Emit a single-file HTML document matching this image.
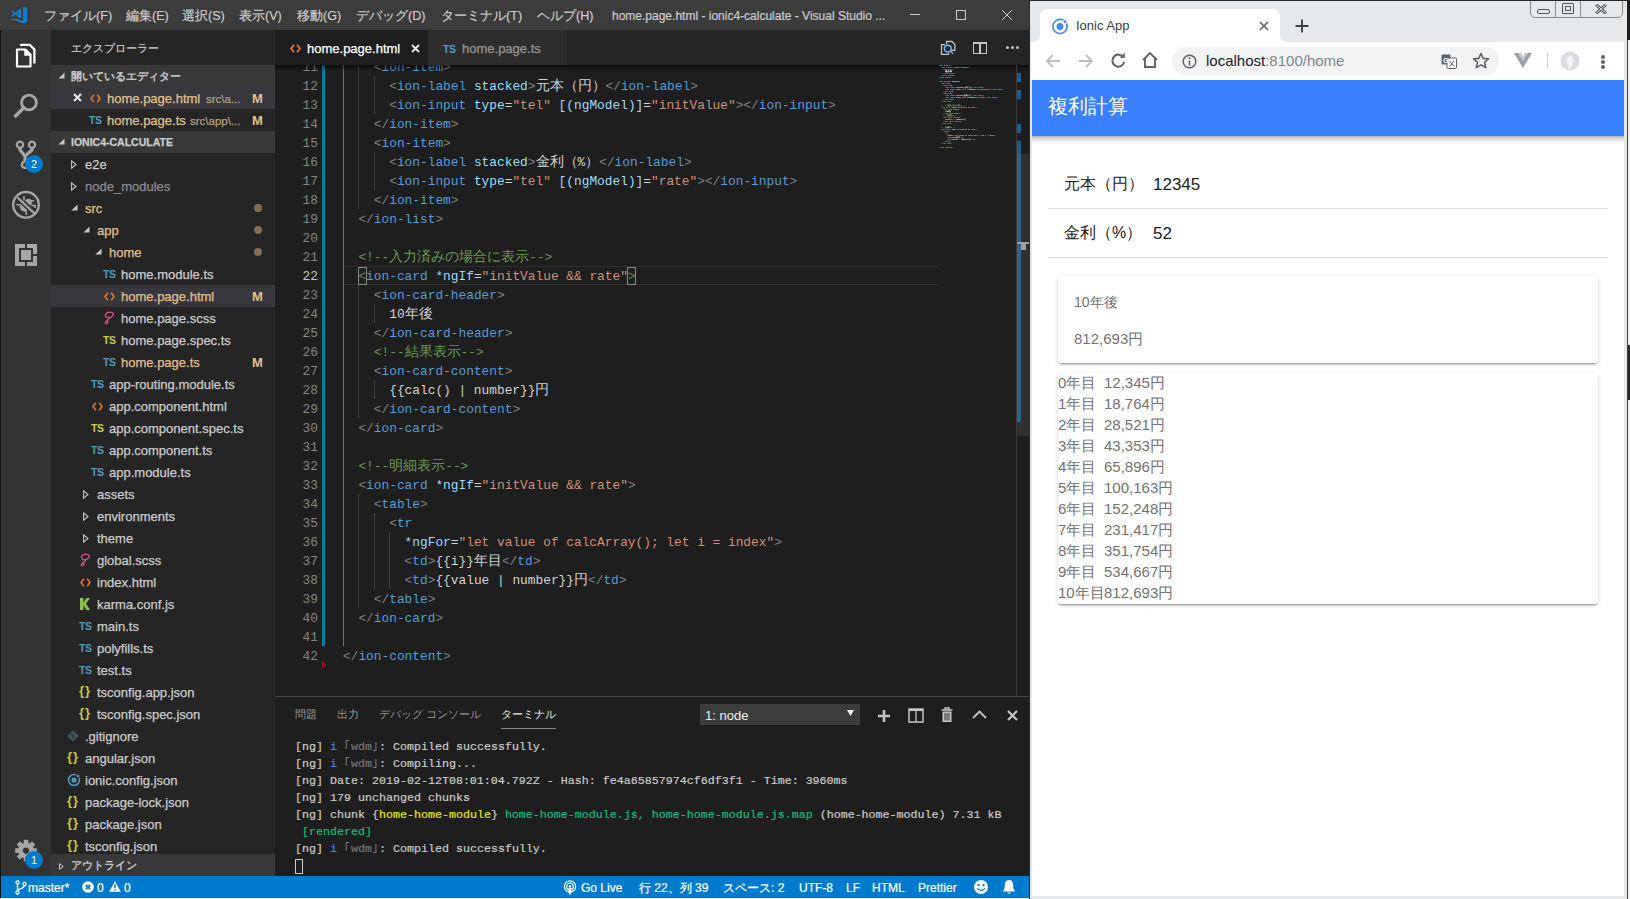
<!DOCTYPE html><html><head><meta charset="utf-8"><style>
*{box-sizing:border-box}
html,body{margin:0;padding:0}
body{width:1630px;height:899px;overflow:hidden;position:relative;background:#e8e8e8;font-family:"Liberation Sans",sans-serif}
.abs{position:absolute}
.t{position:absolute;white-space:pre;line-height:1}
#vs{position:absolute;left:0;top:0;width:1030px;height:898px;background:#1e1e1e;overflow:hidden}
#title{position:absolute;left:0;top:0;width:1030px;height:30px;background:#3c3c3c}
#title .m{position:absolute;top:8.5px;font-size:12.6px;color:#cccccc;white-space:pre;line-height:14px;-webkit-text-stroke:0.2px currentColor}
#act{position:absolute;left:1px;top:30px;width:50px;height:846px;background:#333333}
#side{position:absolute;left:51px;top:30px;width:224px;height:846px;background:#252526;overflow:hidden}
.row{position:absolute;left:0;width:224px;height:22px}
.row .n{position:absolute;top:5px;font-size:13px;line-height:14px;white-space:pre;color:#cccccc;-webkit-text-stroke:0.25px currentColor}
.hdr{background:#383838}
.sel{background:#37373d}
.mod{color:#e2c08d !important}
.dot{position:absolute;left:203px;top:7px;width:8px;height:8px;border-radius:4px;background:#7f6f57}
.M{position:absolute;left:201px;top:5px;font-size:13px;line-height:14px;color:#e2c08d;font-weight:bold}
.ico{position:absolute;top:3px;font-size:11px;font-weight:bold;line-height:16px}
.tw{position:absolute;top:7px;width:0;height:0}
.tw.c{border-left:5px solid #c5c5c5;border-top:4px solid transparent;border-bottom:4px solid transparent;top:7px}
.tw.o{border-right:6px solid #c5c5c5;border-top:6px solid transparent;top:8px}
#tabs{position:absolute;left:275px;top:30px;width:755px;height:35px;background:#252526}
#ed{position:absolute;left:275px;top:65px;width:755px;height:631px;background:#1e1e1e;overflow:hidden}
.ln{position:absolute;left:0;width:42px;text-align:right;font-family:"Liberation Mono",monospace;font-size:12.83px;line-height:19px;color:#858585;white-space:pre}
.cl{position:absolute;left:68px;font-family:"Liberation Mono",monospace;font-size:12.83px;line-height:19px;color:#d4d4d4;white-space:pre}
.g{position:absolute;width:1px;background:#404040}
.cj{font-size:13.85px}
.hw{display:inline-block;width:7px;overflow:hidden;vertical-align:top}
.mm .cj{font-size:10px}
.p{color:#808080}.tg{color:#569cd6}.at{color:#9cdcfe}.st{color:#ce9178}.cm{color:#6a9955}.tx{color:#d4d4d4}
#panel{position:absolute;left:275px;top:696px;width:755px;height:180px;background:#1e1e1e;border-top:1px solid #454545}
.term{position:absolute;left:20px;font-family:"Liberation Mono",monospace;font-size:11.67px;line-height:17px;color:#cccccc;white-space:pre;-webkit-text-stroke:0.2px currentColor}
#status{position:absolute;left:1px;top:876px;width:1029px;height:22px;background:#007acc;color:#fff}
#status .s{position:absolute;top:6px;font-size:12px;line-height:13px;white-space:pre;color:#fff;-webkit-text-stroke:0.2px currentColor}
#chrome{position:absolute;left:1029px;top:0;width:598px;height:899px;background:#e4e8eb;border-left:1px solid #2a2a2a;overflow:hidden}
#page{position:absolute;left:2px;top:80px;width:592px;height:816px;background:#fff;overflow:hidden}
</style></head><body>
<div id="vs">
<div class="abs" style="left:0;top:0;width:1px;height:898px;background:#111"></div>
<div id="title">
<svg class="abs" style="left:6px;top:2px" width="28" height="26" viewBox="0 0 28 26">
<path d="M17 5 L18.3 4.9 L21 6 V20 L18.5 21 L17 20.6 Z" fill="#0a7fd4"/>
<path d="M5.5 17.3 C9 17.5 13 19 17 20.8 L17.5 19.8 C13 18.3 9 17 5.5 17.3 Z" fill="#0e88e0" stroke="#0e88e0" stroke-width="0.9"/>
<path d="M8.7 11.6 L13.8 7.3 L15 7.6 V15.6 L13.8 16 Z M10.9 11.6 L13.2 13.4 V9.9 Z" fill="#0e88e0" fill-rule="evenodd"/>
<path d="M6 9.2 L9.3 11.6 L6 14.6" fill="none" stroke="#0e88e0" stroke-width="1.3"/>
</svg>
<div class="m" style="left:44px">ファイル(F)</div>
<div class="m" style="left:126px">編集(E)</div>
<div class="m" style="left:182px">選択(S)</div>
<div class="m" style="left:239px">表示(V)</div>
<div class="m" style="left:297px">移動(G)</div>
<div class="m" style="left:356px">デバッグ(D)</div>
<div class="m" style="left:441px">ターミナル(T)</div>
<div class="m" style="left:537px">ヘルプ(H)</div>
<div class="m" style="left:612px;font-size:12px">home.page.html - ionic4-calculate - Visual Studio ...</div>
<div class="abs" style="left:910px;top:14px;width:10px;height:1px;background:#cccccc"></div>
<div class="abs" style="left:956px;top:10px;width:10px;height:10px;border:1px solid #cccccc"></div>
<svg class="abs" style="left:1002px;top:10px" width="10" height="10" viewBox="0 0 10 10"><path d="M0 0 L10 10 M10 0 L0 10" stroke="#cccccc" stroke-width="1"/></svg>
</div>
<div id="act">
<svg class="abs" style="left:14px;top:13px" width="24" height="25" viewBox="0 0 24 25">
<path d="M5.2 2.5 L6.2 1.9 H14.8 L19.4 6.5 V20.5" fill="none" stroke="#ffffff" stroke-width="2.3"/>
<path d="M2 6.5 H10.5 L15.5 11.5 V23.5 H2 Z" fill="none" stroke="#ffffff" stroke-width="2.2" stroke-linejoin="round"/>
<path d="M10 6 V12 H16" fill="#ffffff" stroke="#ffffff" stroke-width="1.5"/>
</svg>
<svg class="abs" style="left:11px;top:61.5px" width="28" height="28" viewBox="0 0 28 28">
<circle cx="17" cy="10.5" r="7.4" fill="none" stroke="#a6a6a6" stroke-width="2.9"/>
<path d="M11.8 15.8 L3.5 24" stroke="#a6a6a6" stroke-width="3.4" stroke-linecap="round"/>
</svg>
<svg class="abs" style="left:12px;top:105px" width="26" height="34" viewBox="0 0 26 34">
<circle cx="7" cy="9.7" r="3.1" fill="none" stroke="#a6a6a6" stroke-width="2.3"/>
<circle cx="19" cy="9.7" r="3.1" fill="none" stroke="#a6a6a6" stroke-width="2.3"/>
<circle cx="12" cy="29.8" r="3.1" fill="none" stroke="#a6a6a6" stroke-width="2.3"/>
<path d="M7 12.5 V15 L12 21 V26.5 M19 12.5 V15 L12 21" fill="none" stroke="#a6a6a6" stroke-width="3.2"/>
</svg>
<div class="abs" style="left:24px;top:125px;width:18px;height:18px;border-radius:9px;background:#007acc;color:#fff;font-size:11px;line-height:18px;text-align:center">2</div>
<svg class="abs" style="left:7px;top:156px" width="36" height="36" viewBox="0 0 36 36">
<g stroke="#a6a6a6" fill="none">
<circle cx="18" cy="18.8" r="12.8" stroke-width="2.4"/>
<path d="M9.5 11.5 L26.5 27.5" stroke-width="2.4"/>
<path d="M8.3 18.8 H13 M16 10 V14.5 M23 15 L26 14.5 M23.5 19.5 H27 V22 M18 25 L18.4 29" stroke-width="1.6"/>
</g>
<path d="M11.6 21 C12.5 26 17.5 26.5 19.5 24.5 L13.8 19 C12.5 19 11.5 19.8 11.6 21 Z" fill="#a6a6a6"/>
<path d="M17 14.5 L22.5 19.8 C24 18.5 24.5 15.5 23 13.5 C21 12 18.5 12.5 17 14.5 Z" fill="#a6a6a6"/>
</svg>
<svg class="abs" style="left:14px;top:214px" width="22" height="22" viewBox="0 0 22 22">
<path d="M0 0 H10 V4 H4 V18 H10 V22 H0 Z" fill="#a6a6a6"/>
<path d="M12 0 H22 V10 H18 V4 H12 Z" fill="#a6a6a6"/>
<path d="M12 22 H22 V12 H18 V18 H12 Z" fill="#a6a6a6"/>
<rect x="6" y="6" width="10" height="10" fill="#a6a6a6"/>
</svg>
<svg class="abs" style="left:12px;top:808px" width="26" height="26" viewBox="0 0 26 26">
<g transform="translate(13 12.6)">
<circle r="7.8" fill="#a6a6a6"/>
<g fill="#a6a6a6"><rect x="-2.3" y="-10.8" width="4.6" height="5" transform="rotate(0)"/><rect x="-2.3" y="-10.8" width="4.6" height="5" transform="rotate(45)"/><rect x="-2.3" y="-10.8" width="4.6" height="5" transform="rotate(90)"/><rect x="-2.3" y="-10.8" width="4.6" height="5" transform="rotate(135)"/><rect x="-2.3" y="-10.8" width="4.6" height="5" transform="rotate(180)"/><rect x="-2.3" y="-10.8" width="4.6" height="5" transform="rotate(225)"/><rect x="-2.3" y="-10.8" width="4.6" height="5" transform="rotate(270)"/><rect x="-2.3" y="-10.8" width="4.6" height="5" transform="rotate(315)"/></g>
<circle r="3.1" fill="#333333"/>
</g>
</svg>
<div class="abs" style="left:24px;top:821px;width:18px;height:18px;border-radius:9px;background:#007acc;color:#fff;font-size:11px;line-height:18px;text-align:center">1</div>
</div>
<div id="side">
<div class="t" style="left:20px;top:13px;font-size:11px;color:#c8c8c8;-webkit-text-stroke:0.2px currentColor">エクスプローラー</div>
<div class="row hdr" style="top:35px"><svg class="abs" style="left:6.5px;top:6.5px" width="7" height="7" viewBox="0 0 7 7"><path d="M6.5 0.5 V6.5 H0.5 Z" fill="#c5c5c5"/></svg><div class="n" style="left:20px;top:4px;font-size:11px;color:#cccccc;-webkit-text-stroke:0.45px currentColor">開いているエディター</div></div>
<div class="row sel" style="top:57px"><svg class="abs" style="left:22px;top:6px" width="9" height="9" viewBox="0 0 9 9"><path d="M1 1 L8 8 M8 1 L1 8" stroke="#e8e8e8" stroke-width="2"/></svg><svg class="abs" style="left:39px;top:7px" width="11" height="9" viewBox="0 0 11 9"><path d="M3.8 0.8 L1 4.5 L3.8 8.2 M7.2 0.8 L10 4.5 L7.2 8.2" stroke="#e37933" stroke-width="1.5" fill="none"/></svg><div class="n mod" style="left:56px">home.page.html</div><div class="n" style="left:155px;font-size:11.5px;top:5px;color:#b5a07d">src\a...</div><div class="M">M</div></div>
<div class="row" style="top:79px"><div class="ico" style="left:38px;color:#519aba;font-size:10.5px;letter-spacing:-0.3px;top:3px">TS</div><div class="n mod" style="left:56px">home.page.ts</div><div class="n" style="left:139px;font-size:11.5px;top:5px;color:#b5a07d">src\app\...</div><div class="M">M</div></div>
<div class="row hdr" style="top:101px"><svg class="abs" style="left:6.5px;top:6.5px" width="7" height="7" viewBox="0 0 7 7"><path d="M6.5 0.5 V6.5 H0.5 Z" fill="#c5c5c5"/></svg><div class="n" style="left:20px;top:4px;font-size:10.5px;font-weight:bold;color:#cccccc">IONIC4-CALCULATE</div></div>
<div class="row " style="top:123px"><svg class="abs" style="left:20px;top:7px" width="6" height="9" viewBox="0 0 6 9"><path d="M0.6 0.8 L5 4.5 L0.6 8.2 Z" fill="none" stroke="#c5c5c5" stroke-width="1.1"/></svg><div class="n" style="left:34px;color:#cccccc">e2e</div></div>
<div class="row " style="top:145px"><svg class="abs" style="left:20px;top:7px" width="6" height="9" viewBox="0 0 6 9"><path d="M0.6 0.8 L5 4.5 L0.6 8.2 Z" fill="none" stroke="#c5c5c5" stroke-width="1.1"/></svg><div class="n" style="left:34px;color:#8c8c8c">node_modules</div></div>
<div class="row " style="top:167px"><svg class="abs" style="left:20px;top:7px" width="7" height="7" viewBox="0 0 7 7"><path d="M6.5 0.5 V6.5 H0.5 Z" fill="#c5c5c5"/></svg><div class="n" style="left:34px;color:#e2c08d">src</div><div class="dot"></div></div>
<div class="row " style="top:189px"><svg class="abs" style="left:32px;top:7px" width="7" height="7" viewBox="0 0 7 7"><path d="M6.5 0.5 V6.5 H0.5 Z" fill="#c5c5c5"/></svg><div class="n" style="left:46px;color:#e2c08d">app</div><div class="dot"></div></div>
<div class="row " style="top:211px"><svg class="abs" style="left:44px;top:7px" width="7" height="7" viewBox="0 0 7 7"><path d="M6.5 0.5 V6.5 H0.5 Z" fill="#c5c5c5"/></svg><div class="n" style="left:58px;color:#e2c08d">home</div><div class="dot"></div></div>
<div class="row " style="top:233px"><div class="ico" style="left:52px;color:#519aba;font-size:10.5px;letter-spacing:-0.3px;top:3px">TS</div><div class="n" style="left:70px;color:#cccccc">home.module.ts</div></div>
<div class="row sel" style="top:255px"><svg class="abs" style="left:53px;top:7px" width="11" height="9" viewBox="0 0 11 9"><path d="M3.8 0.8 L1 4.5 L3.8 8.2 M7.2 0.8 L10 4.5 L7.2 8.2" stroke="#e37933" stroke-width="1.5" fill="none"/></svg><div class="n" style="left:70px;color:#e2c08d">home.page.html</div><div class="M">M</div></div>
<div class="row " style="top:277px"><svg class="abs" style="left:52px;top:4px" width="12" height="14" viewBox="0 0 12 14"><path d="M4.5 6.8 C1.5 6 1.8 1.2 7 1.2 C10.5 1.2 11.3 3.6 9.3 5.3 C7.8 6.6 5.5 7 5.2 6 M6.8 7 C6 8.5 4.5 9 3 10.5 C1.8 11.8 2.5 13.3 4 12.5 C5.5 11.6 5.2 10.3 4.2 10.2" stroke="#d9538a" stroke-width="1.25" fill="none"/></svg><div class="n" style="left:70px;color:#cccccc">home.page.scss</div></div>
<div class="row " style="top:299px"><div class="ico" style="left:52px;color:#cbcb41;font-size:10.5px;letter-spacing:-0.3px;top:3px">TS</div><div class="n" style="left:70px;color:#cccccc">home.page.spec.ts</div></div>
<div class="row " style="top:321px"><div class="ico" style="left:52px;color:#519aba;font-size:10.5px;letter-spacing:-0.3px;top:3px">TS</div><div class="n" style="left:70px;color:#e2c08d">home.page.ts</div><div class="M">M</div></div>
<div class="row " style="top:343px"><div class="ico" style="left:40px;color:#519aba;font-size:10.5px;letter-spacing:-0.3px;top:3px">TS</div><div class="n" style="left:58px;color:#cccccc">app-routing.module.ts</div></div>
<div class="row " style="top:365px"><svg class="abs" style="left:41px;top:7px" width="11" height="9" viewBox="0 0 11 9"><path d="M3.8 0.8 L1 4.5 L3.8 8.2 M7.2 0.8 L10 4.5 L7.2 8.2" stroke="#e37933" stroke-width="1.5" fill="none"/></svg><div class="n" style="left:58px;color:#cccccc">app.component.html</div></div>
<div class="row " style="top:387px"><div class="ico" style="left:40px;color:#cbcb41;font-size:10.5px;letter-spacing:-0.3px;top:3px">TS</div><div class="n" style="left:58px;color:#cccccc">app.component.spec.ts</div></div>
<div class="row " style="top:409px"><div class="ico" style="left:40px;color:#519aba;font-size:10.5px;letter-spacing:-0.3px;top:3px">TS</div><div class="n" style="left:58px;color:#cccccc">app.component.ts</div></div>
<div class="row " style="top:431px"><div class="ico" style="left:40px;color:#519aba;font-size:10.5px;letter-spacing:-0.3px;top:3px">TS</div><div class="n" style="left:58px;color:#cccccc">app.module.ts</div></div>
<div class="row " style="top:453px"><svg class="abs" style="left:32px;top:7px" width="6" height="9" viewBox="0 0 6 9"><path d="M0.6 0.8 L5 4.5 L0.6 8.2 Z" fill="none" stroke="#c5c5c5" stroke-width="1.1"/></svg><div class="n" style="left:46px;color:#cccccc">assets</div></div>
<div class="row " style="top:475px"><svg class="abs" style="left:32px;top:7px" width="6" height="9" viewBox="0 0 6 9"><path d="M0.6 0.8 L5 4.5 L0.6 8.2 Z" fill="none" stroke="#c5c5c5" stroke-width="1.1"/></svg><div class="n" style="left:46px;color:#cccccc">environments</div></div>
<div class="row " style="top:497px"><svg class="abs" style="left:32px;top:7px" width="6" height="9" viewBox="0 0 6 9"><path d="M0.6 0.8 L5 4.5 L0.6 8.2 Z" fill="none" stroke="#c5c5c5" stroke-width="1.1"/></svg><div class="n" style="left:46px;color:#cccccc">theme</div></div>
<div class="row " style="top:519px"><svg class="abs" style="left:28px;top:4px" width="12" height="14" viewBox="0 0 12 14"><path d="M4.5 6.8 C1.5 6 1.8 1.2 7 1.2 C10.5 1.2 11.3 3.6 9.3 5.3 C7.8 6.6 5.5 7 5.2 6 M6.8 7 C6 8.5 4.5 9 3 10.5 C1.8 11.8 2.5 13.3 4 12.5 C5.5 11.6 5.2 10.3 4.2 10.2" stroke="#d9538a" stroke-width="1.25" fill="none"/></svg><div class="n" style="left:46px;color:#cccccc">global.scss</div></div>
<div class="row " style="top:541px"><svg class="abs" style="left:29px;top:7px" width="11" height="9" viewBox="0 0 11 9"><path d="M3.8 0.8 L1 4.5 L3.8 8.2 M7.2 0.8 L10 4.5 L7.2 8.2" stroke="#e37933" stroke-width="1.5" fill="none"/></svg><div class="n" style="left:46px;color:#cccccc">index.html</div></div>
<div class="row " style="top:563px"><svg class="abs" style="left:29px;top:5px" width="10" height="12" viewBox="0 0 10 12"><path d="M0 0 H3.5 V4.5 L6.5 0 H10 L6 5.5 L10 12 H6.5 L3.5 7 V12 H0 Z" fill="#8dc149"/></svg><div class="n" style="left:46px;color:#cccccc">karma.conf.js</div></div>
<div class="row " style="top:585px"><div class="ico" style="left:28px;color:#519aba;font-size:10.5px;letter-spacing:-0.3px;top:3px">TS</div><div class="n" style="left:46px;color:#cccccc">main.ts</div></div>
<div class="row " style="top:607px"><div class="ico" style="left:28px;color:#519aba;font-size:10.5px;letter-spacing:-0.3px;top:3px">TS</div><div class="n" style="left:46px;color:#cccccc">polyfills.ts</div></div>
<div class="row " style="top:629px"><div class="ico" style="left:28px;color:#519aba;font-size:10.5px;letter-spacing:-0.3px;top:3px">TS</div><div class="n" style="left:46px;color:#cccccc">test.ts</div></div>
<div class="row " style="top:651px"><div class="ico" style="left:28px;color:#cbcb41;font-size:13px;font-weight:bold;top:2px;letter-spacing:1px">{}</div><div class="n" style="left:46px;color:#cccccc">tsconfig.app.json</div></div>
<div class="row " style="top:673px"><div class="ico" style="left:28px;color:#cbcb41;font-size:13px;font-weight:bold;top:2px;letter-spacing:1px">{}</div><div class="n" style="left:46px;color:#cccccc">tsconfig.spec.json</div></div>
<div class="row " style="top:695px"><svg class="abs" style="left:16px;top:5px" width="12" height="12" viewBox="0 0 12 12"><path d="M6 0.2 L11.8 6 L6 11.8 L0.2 6 Z" fill="#41535b"/><path d="M4.2 3.6 L7 6.4 M6.2 5.6 V9" stroke="#252526" stroke-width="1.1"/></svg><div class="n" style="left:34px;color:#cccccc">.gitignore</div></div>
<div class="row " style="top:717px"><div class="ico" style="left:16px;color:#cbcb41;font-size:13px;font-weight:bold;top:2px;letter-spacing:1px">{}</div><div class="n" style="left:34px;color:#cccccc">angular.json</div></div>
<div class="row " style="top:739px"><svg class="abs" style="left:16px;top:4px" width="14" height="14" viewBox="0 0 14 14"><circle cx="7" cy="7" r="5.5" stroke="#519aba" stroke-width="1.5" fill="none"/><circle cx="7" cy="7" r="2.6" fill="#519aba"/><circle cx="11" cy="3" r="1.8" fill="#519aba" stroke="#252526" stroke-width="0.8"/></svg><div class="n" style="left:34px;color:#cccccc">ionic.config.json</div></div>
<div class="row " style="top:761px"><div class="ico" style="left:16px;color:#cbcb41;font-size:13px;font-weight:bold;top:2px;letter-spacing:1px">{}</div><div class="n" style="left:34px;color:#cccccc">package-lock.json</div></div>
<div class="row " style="top:783px"><div class="ico" style="left:16px;color:#cbcb41;font-size:13px;font-weight:bold;top:2px;letter-spacing:1px">{}</div><div class="n" style="left:34px;color:#cccccc">package.json</div></div>
<div class="row " style="top:805px"><div class="ico" style="left:16px;color:#cbcb41;font-size:13px;font-weight:bold;top:2px;letter-spacing:1px">{}</div><div class="n" style="left:34px;color:#cccccc">tsconfig.json</div></div>
<div class="row hdr" style="top:824px;height:22px"><svg class="abs" style="left:8px;top:9px" width="5" height="7" viewBox="0 0 5 7"><path d="M0.5 0.6 L4.3 3.5 L0.5 6.4 Z" fill="none" stroke="#c5c5c5" stroke-width="1"/></svg><div class="n" style="left:20px;top:4px;font-size:11px;color:#cccccc;-webkit-text-stroke:0.35px currentColor">アウトライン</div></div>
</div>
<div id="tabs">
<div class="abs" style="left:0;top:0;width:153px;height:35px;background:#1e1e1e"></div>
<div class="abs" style="left:153px;top:0;width:139px;height:35px;background:#2d2d2d"></div>
<svg class="abs" style="left:15px;top:14px" width="11" height="9" viewBox="0 0 11 9"><path d="M4 0.8 L1 4.5 L4 8.2 M7 0.8 L10 4.5 L7 8.2" stroke="#e37933" stroke-width="1.6" fill="none"/></svg>
<div class="t" style="left:32px;top:12px;font-size:13px;color:#ffffff;-webkit-text-stroke:0.25px currentColor">home.page.html</div>
<svg class="abs" style="left:136px;top:14px" width="9" height="9" viewBox="0 0 9 9"><path d="M1 1 L8 8 M8 1 L1 8" stroke="#e8e8e8" stroke-width="1.8"/></svg>
<div class="ico" style="left:168px;top:10.5px;color:#519aba;font-size:10.5px;letter-spacing:-0.3px">TS</div>
<div class="t" style="left:187px;top:12px;font-size:13px;color:#969696;-webkit-text-stroke:0.25px currentColor">home.page.ts</div>
<svg class="abs" style="left:664px;top:10px" width="18" height="16" viewBox="0 0 18 16">
<path d="M6 4.6 H2.5 V14.3 H9.5 V12.8" fill="none" stroke="#c5c5c5" stroke-width="1.3"/>
<path d="M7.5 4 V1.5 H13 L15.8 4.3 V10.3 H12.5" fill="none" stroke="#c5c5c5" stroke-width="1.3"/>
<circle cx="8.8" cy="8.6" r="3.4" fill="#252526" stroke="#75beff" stroke-width="1.4"/>
<path d="M11.2 11 L14 13.8" stroke="#75beff" stroke-width="1.5"/>
</svg>
<div class="abs" style="left:698px;top:12px;width:14px;height:12px;border:1.5px solid #c5c5c5;border-top-width:2.5px"></div><div class="abs" style="left:704.2px;top:12px;width:1.6px;height:12px;background:#c5c5c5"></div>
<div class="abs" style="left:730.8px;top:15.8px;width:3.4px;height:3.4px;background:#c5c5c5;border-radius:2px"></div><div class="abs" style="left:735.8px;top:15.8px;width:3.4px;height:3.4px;background:#c5c5c5;border-radius:2px"></div><div class="abs" style="left:740.8px;top:15.8px;width:3.4px;height:3.4px;background:#c5c5c5;border-radius:2px"></div>
</div>
<div id="ed">
<div class="abs" style="left:68px;top:201px;width:595px;height:19px;border-top:1px solid #2e2e2e;border-bottom:1px solid #2e2e2e"></div>
<div class="g" style="left:68px;top:0px;height:581px;background:#707070"></div>
<div class="g" style="left:83px;top:0px;height:144px;background:#404040"></div>
<div class="g" style="left:99px;top:11px;height:38px;background:#404040"></div>
<div class="g" style="left:99px;top:87px;height:38px;background:#404040"></div>
<div class="g" style="left:83px;top:220px;height:133px;background:#404040"></div>
<div class="g" style="left:99px;top:239px;height:19px;background:#404040"></div>
<div class="g" style="left:99px;top:315px;height:19px;background:#404040"></div>
<div class="g" style="left:83px;top:429px;height:114px;background:#404040"></div>
<div class="g" style="left:99px;top:448px;height:76px;background:#404040"></div>
<div class="g" style="left:114px;top:467px;height:57px;background:#404040"></div>
<div class="ln" style="top:-7px;left:1px;color:#858585">11</div>
<div class="cl" style="top:-7px">    <span class="p">&lt;</span><span class="tg">ion-item</span><span class="p">&gt;</span></div>
<div class="ln" style="top:12px;left:1px;color:#858585">12</div>
<div class="cl" style="top:12px">      <span class="p">&lt;</span><span class="tg">ion-label</span> <span class="at">stacked</span><span class="p">&gt;</span><span class="cj">元本（円）</span><span class="p">&lt;/</span><span class="tg">ion-label</span><span class="p">&gt;</span></div>
<div class="ln" style="top:31px;left:1px;color:#858585">13</div>
<div class="cl" style="top:31px">      <span class="p">&lt;</span><span class="tg">ion-input</span> <span class="at">type</span><span class="tx">=</span><span class="st">&quot;tel&quot;</span> <span class="at">[(ngModel)]</span><span class="tx">=</span><span class="st">&quot;initValue&quot;</span><span class="p">&gt;</span><span class="p">&lt;/</span><span class="tg">ion-input</span><span class="p">&gt;</span></div>
<div class="ln" style="top:50px;left:1px;color:#858585">14</div>
<div class="cl" style="top:50px">    <span class="p">&lt;/</span><span class="tg">ion-item</span><span class="p">&gt;</span></div>
<div class="ln" style="top:69px;left:1px;color:#858585">15</div>
<div class="cl" style="top:69px">    <span class="p">&lt;</span><span class="tg">ion-item</span><span class="p">&gt;</span></div>
<div class="ln" style="top:88px;left:1px;color:#858585">16</div>
<div class="cl" style="top:88px">      <span class="p">&lt;</span><span class="tg">ion-label</span> <span class="at">stacked</span><span class="p">&gt;</span><span class="cj">金利（</span>%<span class="cj">）</span><span class="p">&lt;/</span><span class="tg">ion-label</span><span class="p">&gt;</span></div>
<div class="ln" style="top:107px;left:1px;color:#858585">17</div>
<div class="cl" style="top:107px">      <span class="p">&lt;</span><span class="tg">ion-input</span> <span class="at">type</span><span class="tx">=</span><span class="st">&quot;tel&quot;</span> <span class="at">[(ngModel)]</span><span class="tx">=</span><span class="st">&quot;rate&quot;</span><span class="p">&gt;</span><span class="p">&lt;/</span><span class="tg">ion-input</span><span class="p">&gt;</span></div>
<div class="ln" style="top:126px;left:1px;color:#858585">18</div>
<div class="cl" style="top:126px">    <span class="p">&lt;/</span><span class="tg">ion-item</span><span class="p">&gt;</span></div>
<div class="ln" style="top:145px;left:1px;color:#858585">19</div>
<div class="cl" style="top:145px">  <span class="p">&lt;/</span><span class="tg">ion-list</span><span class="p">&gt;</span></div>
<div class="ln" style="top:164px;left:1px;color:#858585">20</div>
<div class="ln" style="top:183px;left:1px;color:#858585">21</div>
<div class="cl" style="top:183px">  <span class="cm">&lt;!--<span class="cj">入力済みの場合に表示</span>--&gt;</span></div>
<div class="ln" style="top:202px;left:1px;color:#c6c6c6">22</div>
<div class="cl" style="top:202px">  <span class="p">&lt;</span><span class="tg">ion-card</span> <span class="at">*ngIf</span><span class="tx">=</span><span class="st">&quot;initValue &amp;&amp; rate&quot;</span><span class="p">&gt;</span></div>
<div class="ln" style="top:221px;left:1px;color:#858585">23</div>
<div class="cl" style="top:221px">    <span class="p">&lt;</span><span class="tg">ion-card-header</span><span class="p">&gt;</span></div>
<div class="ln" style="top:240px;left:1px;color:#858585">24</div>
<div class="cl" style="top:240px">      10<span class="cj">年後</span></div>
<div class="ln" style="top:259px;left:1px;color:#858585">25</div>
<div class="cl" style="top:259px">    <span class="p">&lt;/</span><span class="tg">ion-card-header</span><span class="p">&gt;</span></div>
<div class="ln" style="top:278px;left:1px;color:#858585">26</div>
<div class="cl" style="top:278px">    <span class="cm">&lt;!--<span class="cj">結果表示</span>--&gt;</span></div>
<div class="ln" style="top:297px;left:1px;color:#858585">27</div>
<div class="cl" style="top:297px">    <span class="p">&lt;</span><span class="tg">ion-card-content</span><span class="p">&gt;</span></div>
<div class="ln" style="top:316px;left:1px;color:#858585">28</div>
<div class="cl" style="top:316px">      {{calc() | number}}<span class="cj">円</span></div>
<div class="ln" style="top:335px;left:1px;color:#858585">29</div>
<div class="cl" style="top:335px">    <span class="p">&lt;/</span><span class="tg">ion-card-content</span><span class="p">&gt;</span></div>
<div class="ln" style="top:354px;left:1px;color:#858585">30</div>
<div class="cl" style="top:354px">  <span class="p">&lt;/</span><span class="tg">ion-card</span><span class="p">&gt;</span></div>
<div class="ln" style="top:373px;left:1px;color:#858585">31</div>
<div class="ln" style="top:392px;left:1px;color:#858585">32</div>
<div class="cl" style="top:392px">  <span class="cm">&lt;!--<span class="cj">明細表示</span>--&gt;</span></div>
<div class="ln" style="top:411px;left:1px;color:#858585">33</div>
<div class="cl" style="top:411px">  <span class="p">&lt;</span><span class="tg">ion-card</span> <span class="at">*ngIf</span><span class="tx">=</span><span class="st">&quot;initValue &amp;&amp; rate&quot;</span><span class="p">&gt;</span></div>
<div class="ln" style="top:430px;left:1px;color:#858585">34</div>
<div class="cl" style="top:430px">    <span class="p">&lt;</span><span class="tg">table</span><span class="p">&gt;</span></div>
<div class="ln" style="top:449px;left:1px;color:#858585">35</div>
<div class="cl" style="top:449px">      <span class="p">&lt;</span><span class="tg">tr</span></div>
<div class="ln" style="top:468px;left:1px;color:#858585">36</div>
<div class="cl" style="top:468px">        <span class="at">*ngFor</span><span class="tx">=</span><span class="st">&quot;let value of calcArray(); let i = index&quot;</span><span class="p">&gt;</span></div>
<div class="ln" style="top:487px;left:1px;color:#858585">37</div>
<div class="cl" style="top:487px">        <span class="p">&lt;</span><span class="tg">td</span><span class="p">&gt;</span>{{i}}<span class="cj">年目</span><span class="p">&lt;/</span><span class="tg">td</span><span class="p">&gt;</span></div>
<div class="ln" style="top:506px;left:1px;color:#858585">38</div>
<div class="cl" style="top:506px">        <span class="p">&lt;</span><span class="tg">td</span><span class="p">&gt;</span>{{value | number}}<span class="cj">円</span><span class="p">&lt;/</span><span class="tg">td</span><span class="p">&gt;</span></div>
<div class="ln" style="top:525px;left:1px;color:#858585">39</div>
<div class="cl" style="top:525px">    <span class="p">&lt;/</span><span class="tg">table</span><span class="p">&gt;</span></div>
<div class="ln" style="top:544px;left:1px;color:#858585">40</div>
<div class="cl" style="top:544px">  <span class="p">&lt;/</span><span class="tg">ion-card</span><span class="p">&gt;</span></div>
<div class="ln" style="top:563px;left:1px;color:#858585">41</div>
<div class="ln" style="top:582px;left:1px;color:#858585">42</div>
<div class="cl" style="top:582px"><span class="p">&lt;/</span><span class="tg">ion-content</span><span class="p">&gt;</span></div>
<div class="abs" style="left:82.9px;top:202px;width:9px;height:18px;border:1px solid #888888;background:rgba(0,100,0,0.1)"></div>
<div class="abs" style="left:352.4px;top:202px;width:9px;height:18px;border:1px solid #888888;background:rgba(0,100,0,0.1)"></div>
<div class="abs" style="left:47px;top:0;width:3px;height:581px;background:#0c7d9d"></div>
<svg class="abs" style="left:47px;top:596px" width="5" height="8" viewBox="0 0 5 8"><path d="M0 0 L4.5 4 L0 8 Z" fill="#94151b"/></svg>
<div class="abs" style="left:0;top:0;width:755px;height:6px;background:linear-gradient(#000000 0%, rgba(0,0,0,0) 100%);opacity:0.55"></div>
<div class="abs mm" style="left:664px;top:0px;width:600px;font-family:&quot;Liberation Mono&quot;,monospace;font-size:10px;line-height:12px;white-space:pre;color:#d4d4d4;transform:scale(0.16667);transform-origin:0 0;font-weight:bold;filter:brightness(1.3)"><div style="height:12px"><span class="p">&lt;</span><span class="tg">ion-header</span><span class="p">&gt;</span></div><div style="height:12px">  <span class="p">&lt;</span><span class="tg">ion-toolbar</span> <span class="at">color</span><span class="tx">=</span><span class="st">&quot;primary&quot;</span><span class="p">&gt;</span></div><div style="height:12px">    <span class="p">&lt;</span><span class="tg">ion-title</span><span class="p">&gt;</span></div><div style="height:12px">      <span class="cj">複利計算</span></div><div style="height:12px">    <span class="p">&lt;/</span><span class="tg">ion-title</span><span class="p">&gt;</span></div><div style="height:12px">  <span class="p">&lt;/</span><span class="tg">ion-toolbar</span><span class="p">&gt;</span></div><div style="height:12px"><span class="p">&lt;/</span><span class="tg">ion-header</span><span class="p">&gt;</span></div><div style="height:12px">&nbsp;</div><div style="height:12px"><span class="p">&lt;</span><span class="tg">ion-content</span> <span class="at">padding</span><span class="p">&gt;</span></div><div style="height:12px">  <span class="p">&lt;</span><span class="tg">ion-list</span><span class="p">&gt;</span></div><div style="height:12px">    <span class="p">&lt;</span><span class="tg">ion-item</span><span class="p">&gt;</span></div><div style="height:12px">      <span class="p">&lt;</span><span class="tg">ion-label</span> <span class="at">stacked</span><span class="p">&gt;</span><span class="cj">元本（円）</span><span class="p">&lt;/</span><span class="tg">ion-label</span><span class="p">&gt;</span></div><div style="height:12px">      <span class="p">&lt;</span><span class="tg">ion-input</span> <span class="at">type</span><span class="tx">=</span><span class="st">&quot;tel&quot;</span> <span class="at">[(ngModel)]</span><span class="tx">=</span><span class="st">&quot;initValue&quot;</span><span class="p">&gt;</span><span class="p">&lt;/</span><span class="tg">ion-input</span><span class="p">&gt;</span></div><div style="height:12px">    <span class="p">&lt;/</span><span class="tg">ion-item</span><span class="p">&gt;</span></div><div style="height:12px">    <span class="p">&lt;</span><span class="tg">ion-item</span><span class="p">&gt;</span></div><div style="height:12px">      <span class="p">&lt;</span><span class="tg">ion-label</span> <span class="at">stacked</span><span class="p">&gt;</span><span class="cj">金利（</span>%<span class="cj">）</span><span class="p">&lt;/</span><span class="tg">ion-label</span><span class="p">&gt;</span></div><div style="height:12px">      <span class="p">&lt;</span><span class="tg">ion-input</span> <span class="at">type</span><span class="tx">=</span><span class="st">&quot;tel&quot;</span> <span class="at">[(ngModel)]</span><span class="tx">=</span><span class="st">&quot;rate&quot;</span><span class="p">&gt;</span><span class="p">&lt;/</span><span class="tg">ion-input</span><span class="p">&gt;</span></div><div style="height:12px">    <span class="p">&lt;/</span><span class="tg">ion-item</span><span class="p">&gt;</span></div><div style="height:12px">  <span class="p">&lt;/</span><span class="tg">ion-list</span><span class="p">&gt;</span></div><div style="height:12px">&nbsp;</div><div style="height:12px">  <span class="cm">&lt;!--<span class="cj">入力済みの場合に表示</span>--&gt;</span></div><div style="height:12px">  <span class="p">&lt;</span><span class="tg">ion-card</span> <span class="at">*ngIf</span><span class="tx">=</span><span class="st">&quot;initValue &amp;&amp; rate&quot;</span><span class="p">&gt;</span></div><div style="height:12px">    <span class="p">&lt;</span><span class="tg">ion-card-header</span><span class="p">&gt;</span></div><div style="height:12px">      10<span class="cj">年後</span></div><div style="height:12px">    <span class="p">&lt;/</span><span class="tg">ion-card-header</span><span class="p">&gt;</span></div><div style="height:12px">    <span class="cm">&lt;!--<span class="cj">結果表示</span>--&gt;</span></div><div style="height:12px">    <span class="p">&lt;</span><span class="tg">ion-card-content</span><span class="p">&gt;</span></div><div style="height:12px">      {{calc() | number}}<span class="cj">円</span></div><div style="height:12px">    <span class="p">&lt;/</span><span class="tg">ion-card-content</span><span class="p">&gt;</span></div><div style="height:12px">  <span class="p">&lt;/</span><span class="tg">ion-card</span><span class="p">&gt;</span></div><div style="height:12px">&nbsp;</div><div style="height:12px">  <span class="cm">&lt;!--<span class="cj">明細表示</span>--&gt;</span></div><div style="height:12px">  <span class="p">&lt;</span><span class="tg">ion-card</span> <span class="at">*ngIf</span><span class="tx">=</span><span class="st">&quot;initValue &amp;&amp; rate&quot;</span><span class="p">&gt;</span></div><div style="height:12px">    <span class="p">&lt;</span><span class="tg">table</span><span class="p">&gt;</span></div><div style="height:12px">      <span class="p">&lt;</span><span class="tg">tr</span></div><div style="height:12px">        <span class="at">*ngFor</span><span class="tx">=</span><span class="st">&quot;let value of calcArray(); let i = index&quot;</span><span class="p">&gt;</span></div><div style="height:12px">        <span class="p">&lt;</span><span class="tg">td</span><span class="p">&gt;</span>{{i}}<span class="cj">年目</span><span class="p">&lt;/</span><span class="tg">td</span><span class="p">&gt;</span></div><div style="height:12px">        <span class="p">&lt;</span><span class="tg">td</span><span class="p">&gt;</span>{{value | number}}<span class="cj">円</span><span class="p">&lt;/</span><span class="tg">td</span><span class="p">&gt;</span></div><div style="height:12px">    <span class="p">&lt;/</span><span class="tg">table</span><span class="p">&gt;</span></div><div style="height:12px">  <span class="p">&lt;/</span><span class="tg">ion-card</span><span class="p">&gt;</span></div><div style="height:12px">&nbsp;</div><div style="height:12px"><span class="p">&lt;/</span><span class="tg">ion-content</span><span class="p">&gt;</span></div></div>
<div class="abs" style="left:741px;top:0;width:1px;height:631px;background:#3a3a3a"></div>
<div class="abs" style="left:742px;top:8px;width:4px;height:9px;background:#1b5f8f"></div>
<div class="abs" style="left:742px;top:25px;width:4px;height:9px;background:#1b5f8f"></div>
<div class="abs" style="left:742px;top:59px;width:4px;height:9px;background:#1b5f8f"></div>
<div class="abs" style="left:742px;top:76px;width:4px;height:281px;background:#1b5f8f"></div>
<div class="abs" style="left:742px;top:89px;width:13px;height:282px;background:rgba(121,121,121,0.2)"></div>
<div class="abs" style="left:742px;top:177px;width:13px;height:2px;background:#a0a0a0"></div>
<div class="abs" style="left:746px;top:178px;width:5px;height:7px;background:#a0a0a0"></div>
</div>
<div id="panel">
<div class="t" style="left:20px;top:12px;font-size:11px;color:#969696">問題</div>
<div class="t" style="left:62px;top:12px;font-size:11px;color:#969696">出力</div>
<div class="t" style="left:104px;top:12px;font-size:11px;color:#969696">デバッグ コンソール</div>
<div class="t" style="left:226px;top:12px;font-size:11px;color:#e7e7e7">ターミナル</div>
<div class="abs" style="left:226px;top:31px;width:55px;height:1px;background:#e7e7e7;opacity:0.5"></div>
<div class="abs" style="left:425px;top:7px;width:160px;height:21px;background:#3c3c3c"></div>
<div class="t" style="left:430px;top:12px;font-size:13px;color:#f0f0f0">1: node</div>
<svg class="abs" style="left:572px;top:13px" width="7" height="6" viewBox="0 0 7 6"><path d="M0 0 H7 L3.5 6 Z" fill="#f0f0f0"/></svg>
<svg class="abs" style="left:602px;top:12px" width="14" height="14" viewBox="0 0 14 14"><path d="M7 1 V13 M1 7 H13" stroke="#c5c5c5" stroke-width="2.6"/></svg>
<svg class="abs" style="left:633px;top:11px" width="16" height="15" viewBox="0 0 16 15"><rect x="1" y="1" width="14" height="13" fill="none" stroke="#c5c5c5" stroke-width="1.5"/><path d="M1 2 H15" stroke="#c5c5c5" stroke-width="2"/><path d="M8 1 V14" stroke="#c5c5c5" stroke-width="1.3"/></svg>
<svg class="abs" style="left:666px;top:10px" width="12" height="16" viewBox="0 0 12 16"><path d="M0.5 3 H11.5 M4 3 V1 H8 V3" fill="none" stroke="#c5c5c5" stroke-width="1.4"/><path d="M1.5 4.5 H10.5 V15 H1.5 Z" fill="#c5c5c5"/><path d="M4 6 V13.5 M6 6 V13.5 M8 6 V13.5" stroke="#1e1e1e" stroke-width="0.9"/></svg>
<svg class="abs" style="left:697px;top:13px" width="15" height="9" viewBox="0 0 15 9"><path d="M1 8 L7.5 1.5 L14 8" fill="none" stroke="#c5c5c5" stroke-width="1.8"/></svg>
<svg class="abs" style="left:732px;top:13px" width="11" height="11" viewBox="0 0 11 11"><path d="M1 1 L10 10 M10 1 L1 10" stroke="#c5c5c5" stroke-width="2.2"/></svg>
<div class="term" style="top:42px">[ng] <span style="color:#3b8eea">i</span> <span style="color:#767676"><span class="hw">｢</span>wdm<span class="hw">｣</span></span>: Compiled successfully.</div>
<div class="term" style="top:59px">[ng] <span style="color:#3b8eea">i</span> <span style="color:#767676"><span class="hw">｢</span>wdm<span class="hw">｣</span></span>: Compiling...</div>
<div class="term" style="top:76px">[ng] Date: 2019-02-12T08:01:04.792Z - Hash: fe4a65857974cf6df3f1 - Time: 3960ms</div>
<div class="term" style="top:93px">[ng] 179 unchanged chunks</div>
<div class="term" style="top:110px">[ng] chunk {<span style="color:#e5e510">home-home-module</span>} <span style="color:#0dbc79">home-home-module.js, home-home-module.js.map</span> (home-home-module) 7.31 kB</div>
<div class="term" style="top:127px"> <span style="color:#0dbc79">[rendered]</span></div>
<div class="term" style="top:144px">[ng] <span style="color:#3b8eea">i</span> <span style="color:#767676"><span class="hw">｢</span>wdm<span class="hw">｣</span></span>: Compiled successfully.</div>
<div class="abs" style="left:20px;top:162px;width:8px;height:15px;border:1px solid #cccccc"></div>
</div>
<div id="status">
<svg class="abs" style="left:14px;top:4px" width="12" height="15" viewBox="0 0 12 15"><circle cx="2.5" cy="2.5" r="1.6" fill="none" stroke="#fff" stroke-width="1.2"/><circle cx="2.5" cy="12.5" r="1.6" fill="none" stroke="#fff" stroke-width="1.2"/><circle cx="9.5" cy="4" r="1.6" fill="none" stroke="#fff" stroke-width="1.2"/><path d="M2.5 4 V11 M9.5 5.5 C9.5 9 3 8 2.5 11" fill="none" stroke="#fff" stroke-width="1.3"/></svg>
<div class="s" style="left:27px">master*</div>
<svg class="abs" style="left:81px;top:5px" width="12" height="12" viewBox="0 0 12 12"><circle cx="6" cy="6" r="5.8" fill="#fff"/><path d="M3.8 3.8 L8.2 8.2 M8.2 3.8 L3.8 8.2" stroke="#007acc" stroke-width="1.7"/></svg>
<div class="s" style="left:96px">0</div>
<svg class="abs" style="left:108px;top:5px" width="12" height="11" viewBox="0 0 12 11"><path d="M6 0.3 L11.8 10.7 H0.2 Z" fill="#fff"/><path d="M6 3.5 V7.3 M6 8.3 V9.6" stroke="#007acc" stroke-width="1.5"/></svg>
<div class="s" style="left:123px">0</div>
<svg class="abs" style="left:562px;top:4px" width="14" height="15" viewBox="0 0 14 15"><circle cx="7" cy="6.5" r="5.6" fill="none" stroke="#fff" stroke-width="1.2"/><circle cx="7" cy="6.5" r="3.3" fill="none" stroke="#fff" stroke-width="1.2"/><circle cx="7" cy="6.5" r="1.3" fill="#fff"/><path d="M5.5 8 H8.5 L8 14.5 H6 Z" fill="#fff"/></svg>
<div class="s" style="left:580px">Go Live</div>
<div class="s" style="left:638px">行 22、列 39</div>
<div class="s" style="left:722px">スペース: 2</div>
<div class="s" style="left:798px">UTF-8</div>
<div class="s" style="left:845px">LF</div>
<div class="s" style="left:871px">HTML</div>
<div class="s" style="left:917px">Prettier</div>
<svg class="abs" style="left:972px;top:3px" width="16" height="16" viewBox="0 0 16 16"><circle cx="8" cy="8" r="7" fill="#fff"/><circle cx="5.5" cy="6" r="1.2" fill="#007acc"/><circle cx="10.5" cy="6" r="1.2" fill="#007acc"/><path d="M4.2 9.3 C5.5 12 10.5 12 11.8 9.3" fill="none" stroke="#007acc" stroke-width="1.3"/></svg>
<svg class="abs" style="left:1001px;top:3px" width="14" height="16" viewBox="0 0 14 16"><path d="M7 1 C3.5 1 2.8 4 2.8 7 C2.8 10 1.5 11.5 0.8 12.5 H13.2 C12.5 11.5 11.2 10 11.2 7 C11.2 4 10.5 1 7 1 Z" fill="#fff"/><path d="M5.3 13.5 C5.5 15 8.5 15 8.7 13.5 Z" fill="#fff"/></svg>
</div>
</div>
<div id="chrome">
<div class="abs" style="left:500px;top:-3px;width:93px;height:21px;border:1px solid #8a8a8a;border-radius:0 0 5px 5px;background:#e6e9ec"></div>
<div class="abs" style="left:525px;top:0;width:1px;height:17px;background:#8a8a8a"></div>
<div class="abs" style="left:550px;top:0;width:1px;height:17px;background:#8a8a8a"></div>
<div class="abs" style="left:507px;top:9px;width:13px;height:5px;border:1.5px solid #555;border-radius:2px"></div>
<div class="abs" style="left:532px;top:3px;width:12px;height:11px;border:1.5px solid #555;border-radius:1px"></div><div class="abs" style="left:535px;top:6px;width:6px;height:5px;border:1.3px solid #555"></div>
<svg class="abs" style="left:565px;top:4px" width="12" height="10" viewBox="0 0 12 10"><path d="M1 0.5 L11 9.5 M11 0.5 L1 9.5" stroke="#555" stroke-width="3"/><path d="M1 0.5 L11 9.5 M11 0.5 L1 9.5" stroke="#e3e6ea" stroke-width="1"/></svg>
<svg class="abs" style="left:1px;top:8px" width="270" height="35" viewBox="0 0 270 35">
<path d="M0 34 C6 34 9 31 9 26 V9 C9 4 12 1 17 1 H241 C246 1 249 4 249 9 V26 C249 31 252 34 258 34 Z" fill="#ffffff"/>
</svg>
<svg class="abs" style="left:22px;top:18px" width="17" height="17" viewBox="0 0 17 17">
<circle cx="8" cy="8.5" r="7.1" fill="none" stroke="#4a8af4" stroke-width="1.7"/>
<circle cx="8" cy="8.5" r="3.5" fill="#4a8af4"/>
<circle cx="13" cy="3.6" r="2" fill="#4a8af4" stroke="#fff" stroke-width="1"/>
</svg>
<div class="t" style="left:46px;top:19px;font-size:13px;color:#3c4043">Ionic App</div>
<svg class="abs" style="left:229px;top:21px" width="10" height="10" viewBox="0 0 10 10"><path d="M1 1 L9 9 M9 1 L1 9" stroke="#5f6368" stroke-width="1.6"/></svg>
<svg class="abs" style="left:265px;top:19px" width="14" height="14" viewBox="0 0 14 14"><path d="M7 0.5 V13.5 M0.5 7 H13.5" stroke="#3c4043" stroke-width="1.9"/></svg>
<div class="abs" style="left:1px;top:42px;width:593px;height:38px;background:#ffffff"></div>
<div class="abs" style="left:142px;top:47px;width:327px;height:28px;border-radius:14px;background:#f1f3f4"></div>
<svg class="abs" style="left:15px;top:53px" width="16" height="16" viewBox="0 0 16 16"><path d="M15 8 H2.5 M8 2 L2 8 L8 14" fill="none" stroke="#bcbfc3" stroke-width="1.9"/></svg>
<svg class="abs" style="left:48px;top:53px" width="16" height="16" viewBox="0 0 16 16"><path d="M1 8 H13.5 M8 2 L14 8 L8 14" fill="none" stroke="#bcbfc3" stroke-width="1.9"/></svg>
<svg class="abs" style="left:80px;top:52px" width="17" height="17" viewBox="0 0 17 17"><path d="M13.5 5.5 A6 6 0 1 0 14.2 10" fill="none" stroke="#5f6368" stroke-width="2"/><path d="M9.5 5.8 H14.8 V0.5 Z" fill="#5f6368"/></svg>
<svg class="abs" style="left:111px;top:51px" width="18" height="18" viewBox="0 0 18 18"><path d="M2 9 L9 2 L16 9 M4 7.5 V16 H14 V7.5" fill="none" stroke="#5f6368" stroke-width="1.9" stroke-linejoin="miter"/></svg>
<svg class="abs" style="left:152px;top:54px" width="15" height="15" viewBox="0 0 15 15"><circle cx="7.5" cy="7.5" r="6.3" fill="none" stroke="#5f6368" stroke-width="1.5"/><path d="M7.5 6.5 V11.5" stroke="#5f6368" stroke-width="1.6"/><circle cx="7.5" cy="4.3" r="1" fill="#5f6368"/></svg>
<div class="t" style="left:176px;top:53px;font-size:15px;color:#202124">localhost<span style="color:#80868b">:8100/home</span></div>
<svg class="abs" style="left:411px;top:54px" width="16" height="15" viewBox="0 0 16 15">
<rect x="0.5" y="0.5" width="9" height="10" rx="1" fill="#5f6368"/>
<rect x="6" y="4" width="9.5" height="10.5" rx="1" fill="#fff" stroke="#5f6368" stroke-width="1"/>
<text x="2" y="8.5" font-size="7" fill="#fff" font-family="Liberation Sans" font-weight="bold">G</text>
<path d="M8.5 7 L13 12.5 M13 7 L8.5 12.5" stroke="#5f6368" stroke-width="1"/>
</svg>
<svg class="abs" style="left:442px;top:52px" width="18" height="18" viewBox="0 0 18 18">
<path d="M9 1.5 L11.2 6.4 L16.5 6.9 L12.5 10.4 L13.7 15.6 L9 12.9 L4.3 15.6 L5.5 10.4 L1.5 6.9 L6.8 6.4 Z" fill="none" stroke="#5f6368" stroke-width="1.6" stroke-linejoin="round"/>
</svg>
<svg class="abs" style="left:484px;top:53px" width="18" height="15" viewBox="0 0 18 15">
<path d="M0 0 H5 L9 7 L13 0 H18 L9 15 Z" fill="#9aa0a6"/>
<path d="M4 0 H7 L9 3.5 L11 0 H14 L9 8.5 Z" fill="#c6c9cc"/>
</svg>
<div class="abs" style="left:517px;top:53px;width:1px;height:16px;background:#d7d7d7"></div>
<svg class="abs" style="left:530px;top:51px" width="20" height="20" viewBox="0 0 20 20">
<circle cx="10" cy="10" r="9.5" fill="#dadce0"/>
<path d="M7.5 14 C6 11 6.5 5 10 5 C13.5 5 14 10 12.5 14 C12 15.5 11 17 10 19 C9 17.5 8 15.5 7.5 14 Z" fill="#f1f3f4"/>
</svg>
<div class="abs" style="left:570.5px;top:55px;width:4px;height:4px;border-radius:2px;background:#5f6368"></div>
<div class="abs" style="left:570.5px;top:60px;width:4px;height:4px;border-radius:2px;background:#5f6368"></div>
<div class="abs" style="left:570.5px;top:65px;width:4px;height:4px;border-radius:2px;background:#5f6368"></div>
<div id="page">
<div class="abs" style="left:0;top:56px;width:592px;height:8px;background:linear-gradient(rgba(0,0,0,0.3),rgba(0,0,0,0.14) 35%,rgba(0,0,0,0.04) 75%,rgba(0,0,0,0))"></div>
<div class="abs" style="left:0;top:0;width:592px;height:56px;background:#3880ff"></div>
<div class="t" style="left:16px;top:16px;font-size:20px;color:#ffffff">複利計算</div>
<div class="t" style="left:32px;top:96px;font-size:16px;color:#222">元本（円）</div>
<div class="t" style="left:121px;top:96px;font-size:17px;color:#222">12345</div>
<div class="abs" style="left:16px;top:128px;width:560px;height:1px;background:#dedede"></div>
<div class="t" style="left:32px;top:145px;font-size:16px;color:#222">金利（%）</div>
<div class="t" style="left:121px;top:145px;font-size:17px;color:#222">52</div>
<div class="abs" style="left:16px;top:177px;width:560px;height:1px;background:#dedede"></div>
<div class="abs" style="left:26px;top:196px;width:540px;height:87px;border-radius:4px;background:#fff;box-shadow:0 3px 1px -2px rgba(0,0,0,.2),0 2px 2px 0 rgba(0,0,0,.14),0 1px 5px 0 rgba(0,0,0,.12)"></div>
<div class="t" style="left:42px;top:215px;font-size:14px;color:#737373">10年後</div>
<div class="t" style="left:42px;top:251px;font-size:15px;color:#737373">812,693円</div>
<div class="abs" style="left:26px;top:293px;width:540px;height:231px;border-radius:4px;background:#fff;box-shadow:0 3px 1px -2px rgba(0,0,0,.2),0 2px 2px 0 rgba(0,0,0,.14),0 1px 5px 0 rgba(0,0,0,.12)"></div>
<div class="t" style="left:26px;top:294px;font-size:15px;color:#737373;line-height:17px">0年目</div>
<div class="t" style="left:72px;top:294px;font-size:15px;color:#737373;line-height:17px">12,345円</div>
<div class="t" style="left:26px;top:315px;font-size:15px;color:#737373;line-height:17px">1年目</div>
<div class="t" style="left:72px;top:315px;font-size:15px;color:#737373;line-height:17px">18,764円</div>
<div class="t" style="left:26px;top:336px;font-size:15px;color:#737373;line-height:17px">2年目</div>
<div class="t" style="left:72px;top:336px;font-size:15px;color:#737373;line-height:17px">28,521円</div>
<div class="t" style="left:26px;top:357px;font-size:15px;color:#737373;line-height:17px">3年目</div>
<div class="t" style="left:72px;top:357px;font-size:15px;color:#737373;line-height:17px">43,353円</div>
<div class="t" style="left:26px;top:378px;font-size:15px;color:#737373;line-height:17px">4年目</div>
<div class="t" style="left:72px;top:378px;font-size:15px;color:#737373;line-height:17px">65,896円</div>
<div class="t" style="left:26px;top:399px;font-size:15px;color:#737373;line-height:17px">5年目</div>
<div class="t" style="left:72px;top:399px;font-size:15px;color:#737373;line-height:17px">100,163円</div>
<div class="t" style="left:26px;top:420px;font-size:15px;color:#737373;line-height:17px">6年目</div>
<div class="t" style="left:72px;top:420px;font-size:15px;color:#737373;line-height:17px">152,248円</div>
<div class="t" style="left:26px;top:441px;font-size:15px;color:#737373;line-height:17px">7年目</div>
<div class="t" style="left:72px;top:441px;font-size:15px;color:#737373;line-height:17px">231,417円</div>
<div class="t" style="left:26px;top:462px;font-size:15px;color:#737373;line-height:17px">8年目</div>
<div class="t" style="left:72px;top:462px;font-size:15px;color:#737373;line-height:17px">351,754円</div>
<div class="t" style="left:26px;top:483px;font-size:15px;color:#737373;line-height:17px">9年目</div>
<div class="t" style="left:72px;top:483px;font-size:15px;color:#737373;line-height:17px">534,667円</div>
<div class="t" style="left:26px;top:504px;font-size:15px;color:#737373;line-height:17px">10年目</div>
<div class="t" style="left:72px;top:504px;font-size:15px;color:#737373;line-height:17px">812,693円</div>
</div>
<div class="abs" style="left:594px;top:42px;width:3px;height:857px;background:#e4e8eb"></div>
</div>
<div class="abs" style="left:1029px;top:0;width:598px;height:1px;background:#2a2a2a"></div>
<div class="abs" style="left:1627px;top:0;width:3px;height:899px;background:#f6f6f6;border-left:1px solid #404040"></div>
<div class="abs" style="left:1627px;top:0;width:3px;height:40px;background:#1e1e1e"></div>
<div class="abs" style="left:1628px;top:345px;width:2px;height:55px;background:#2a2a2a"></div>
</body></html>
